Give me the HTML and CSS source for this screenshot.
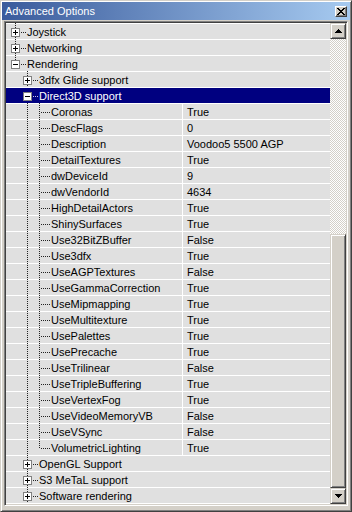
FILE: index.html
```html
<!DOCTYPE html>
<html>
<head>
<meta charset="utf-8">
<title>Advanced Options</title>
<link rel="stylesheet" href="styles.css">
</head>
<body>
<div class="window">
  <div class="titlebar">
    <span class="title">Advanced Options</span>
    <button class="close" type="button" aria-label="Close">
      <svg width="8" height="7" viewBox="0 0 8 7" shape-rendering="crispEdges"><path fill="#000" d="M0 0h2v1h-2zM6 0h2v1h-2zM1 1h2v1h-2zM5 1h2v1h-2zM2 2h4v1h-4zM3 3h2v1h-2zM2 4h4v1h-4zM1 5h2v1h-2zM5 5h2v1h-2zM0 6h2v1h-2zM6 6h2v1h-2z"/></svg>
    </button>
  </div>
  <div class="body">
    <div class="list">
      <div class="rows">
        <div class="row"><span class="c tee"><svg class="box" width="9" height="9" viewBox="0 0 9 9" shape-rendering="crispEdges"><rect x="0.5" y="0.5" width="8" height="8" fill="#fff" stroke="#808080"/><rect x="2" y="4" width="5" height="1"/><rect x="4" y="2" width="1" height="5"/></svg></span><span class="tail"></span><span class="label">Joystick</span></div>
        <div class="row"><span class="c tee"><svg class="box" width="9" height="9" viewBox="0 0 9 9" shape-rendering="crispEdges"><rect x="0.5" y="0.5" width="8" height="8" fill="#fff" stroke="#808080"/><rect x="2" y="4" width="5" height="1"/><rect x="4" y="2" width="1" height="5"/></svg></span><span class="tail"></span><span class="label">Networking</span></div>
        <div class="row"><span class="c last"><svg class="box" width="9" height="9" viewBox="0 0 9 9" shape-rendering="crispEdges"><rect x="0.5" y="0.5" width="8" height="8" fill="#fff" stroke="#808080"/><rect x="2" y="4" width="5" height="1"/></svg></span><span class="tail"></span><span class="label">Rendering</span></div>
        <div class="row"><span class="c"></span><span class="c tee"><svg class="box" width="9" height="9" viewBox="0 0 9 9" shape-rendering="crispEdges"><rect x="0.5" y="0.5" width="8" height="8" fill="#fff" stroke="#808080"/><rect x="2" y="4" width="5" height="1"/><rect x="4" y="2" width="1" height="5"/></svg></span><span class="tail"></span><span class="label">3dfx Glide support</span></div>
        <div class="row selected"><span class="c"></span><span class="c tee"><svg class="box" width="9" height="9" viewBox="0 0 9 9" shape-rendering="crispEdges"><rect x="0.5" y="0.5" width="8" height="8" fill="#fff" stroke="#808080"/><rect x="2" y="4" width="5" height="1"/></svg></span><span class="tail"></span><span class="label">Direct3D support</span></div>
        <div class="row prop"><span class="name"><span class="c"></span><span class="c v"></span><span class="c tee"></span><span class="tail"></span><span class="label">Coronas</span></span><span class="value">True</span></div>
        <div class="row prop"><span class="name"><span class="c"></span><span class="c v"></span><span class="c tee"></span><span class="tail"></span><span class="label">DescFlags</span></span><span class="value">0</span></div>
        <div class="row prop"><span class="name"><span class="c"></span><span class="c v"></span><span class="c tee"></span><span class="tail"></span><span class="label">Description</span></span><span class="value">Voodoo5 5500 AGP</span></div>
        <div class="row prop"><span class="name"><span class="c"></span><span class="c v"></span><span class="c tee"></span><span class="tail"></span><span class="label">DetailTextures</span></span><span class="value">True</span></div>
        <div class="row prop"><span class="name"><span class="c"></span><span class="c v"></span><span class="c tee"></span><span class="tail"></span><span class="label">dwDeviceId</span></span><span class="value">9</span></div>
        <div class="row prop"><span class="name"><span class="c"></span><span class="c v"></span><span class="c tee"></span><span class="tail"></span><span class="label">dwVendorId</span></span><span class="value">4634</span></div>
        <div class="row prop"><span class="name"><span class="c"></span><span class="c v"></span><span class="c tee"></span><span class="tail"></span><span class="label">HighDetailActors</span></span><span class="value">True</span></div>
        <div class="row prop"><span class="name"><span class="c"></span><span class="c v"></span><span class="c tee"></span><span class="tail"></span><span class="label">ShinySurfaces</span></span><span class="value">True</span></div>
        <div class="row prop"><span class="name"><span class="c"></span><span class="c v"></span><span class="c tee"></span><span class="tail"></span><span class="label">Use32BitZBuffer</span></span><span class="value">False</span></div>
        <div class="row prop"><span class="name"><span class="c"></span><span class="c v"></span><span class="c tee"></span><span class="tail"></span><span class="label">Use3dfx</span></span><span class="value">True</span></div>
        <div class="row prop"><span class="name"><span class="c"></span><span class="c v"></span><span class="c tee"></span><span class="tail"></span><span class="label">UseAGPTextures</span></span><span class="value">False</span></div>
        <div class="row prop"><span class="name"><span class="c"></span><span class="c v"></span><span class="c tee"></span><span class="tail"></span><span class="label">UseGammaCorrection</span></span><span class="value">True</span></div>
        <div class="row prop"><span class="name"><span class="c"></span><span class="c v"></span><span class="c tee"></span><span class="tail"></span><span class="label">UseMipmapping</span></span><span class="value">True</span></div>
        <div class="row prop"><span class="name"><span class="c"></span><span class="c v"></span><span class="c tee"></span><span class="tail"></span><span class="label">UseMultitexture</span></span><span class="value">True</span></div>
        <div class="row prop"><span class="name"><span class="c"></span><span class="c v"></span><span class="c tee"></span><span class="tail"></span><span class="label">UsePalettes</span></span><span class="value">True</span></div>
        <div class="row prop"><span class="name"><span class="c"></span><span class="c v"></span><span class="c tee"></span><span class="tail"></span><span class="label">UsePrecache</span></span><span class="value">True</span></div>
        <div class="row prop"><span class="name"><span class="c"></span><span class="c v"></span><span class="c tee"></span><span class="tail"></span><span class="label">UseTrilinear</span></span><span class="value">False</span></div>
        <div class="row prop"><span class="name"><span class="c"></span><span class="c v"></span><span class="c tee"></span><span class="tail"></span><span class="label">UseTripleBuffering</span></span><span class="value">True</span></div>
        <div class="row prop"><span class="name"><span class="c"></span><span class="c v"></span><span class="c tee"></span><span class="tail"></span><span class="label">UseVertexFog</span></span><span class="value">True</span></div>
        <div class="row prop"><span class="name"><span class="c"></span><span class="c v"></span><span class="c tee"></span><span class="tail"></span><span class="label">UseVideoMemoryVB</span></span><span class="value">False</span></div>
        <div class="row prop"><span class="name"><span class="c"></span><span class="c v"></span><span class="c tee"></span><span class="tail"></span><span class="label">UseVSync</span></span><span class="value">False</span></div>
        <div class="row prop"><span class="name"><span class="c"></span><span class="c v"></span><span class="c last"></span><span class="tail"></span><span class="label">VolumetricLighting</span></span><span class="value">True</span></div>
        <div class="row"><span class="c"></span><span class="c tee"><svg class="box" width="9" height="9" viewBox="0 0 9 9" shape-rendering="crispEdges"><rect x="0.5" y="0.5" width="8" height="8" fill="#fff" stroke="#808080"/><rect x="2" y="4" width="5" height="1"/><rect x="4" y="2" width="1" height="5"/></svg></span><span class="tail"></span><span class="label">OpenGL Support</span></div>
        <div class="row"><span class="c"></span><span class="c tee"><svg class="box" width="9" height="9" viewBox="0 0 9 9" shape-rendering="crispEdges"><rect x="0.5" y="0.5" width="8" height="8" fill="#fff" stroke="#808080"/><rect x="2" y="4" width="5" height="1"/><rect x="4" y="2" width="1" height="5"/></svg></span><span class="tail"></span><span class="label">S3 MeTaL support</span></div>
        <div class="row"><span class="c"></span><span class="c tee"><svg class="box" width="9" height="9" viewBox="0 0 9 9" shape-rendering="crispEdges"><rect x="0.5" y="0.5" width="8" height="8" fill="#fff" stroke="#808080"/><rect x="2" y="4" width="5" height="1"/><rect x="4" y="2" width="1" height="5"/></svg></span><span class="tail"></span><span class="label">Software rendering</span></div>
      </div>
      <div class="scrollbar">
        <div class="sbtn"><svg width="7" height="4" viewBox="0 0 7 4" shape-rendering="crispEdges"><path fill="#000" d="M3 0h1v1h1v1h1v1h1v1H0V3h1V2h1V1h1z"/></svg></div>
        <div class="track"><div class="thumb"></div></div>
        <div class="sbtn"><svg width="7" height="4" viewBox="0 0 7 4" shape-rendering="crispEdges"><path fill="#000" d="M0 0h7v1H6v1H5v1H4v1H3V3H2V2H1V1H0z"/></svg></div>
      </div>
    </div>
  </div>
</div>
</body>
</html>
```
FILE: styles.css
```css
* { box-sizing: border-box; }
html, body { margin: 0; padding: 0; }
body {
  width: 352px;
  height: 512px;
  overflow: hidden;
  background: #d4d0c8;
  font-family: "Liberation Sans", Arial, sans-serif;
  font-size: 11px;
  color: #000;
}
.window {
  width: 352px;
  height: 512px;
  display: flex;
  flex-direction: column;
  background: #d4d0c8;
  border: 1px solid;
  border-color: #d4d0c8 #404040 #404040 #d4d0c8;
  box-shadow: inset 1px 1px #fff, inset -1px -1px #808080;
  padding: 1px;
}
.titlebar {
  flex: none;
  height: 18px;
  display: flex;
  align-items: center;
  padding: 0 3px 0 3px;
  background: linear-gradient(to right, #3a5b9c, #a6caf0);
  color: #fff;
}
.title {
  font-size: 11px;
  line-height: 18px;
  white-space: nowrap;
}
.close {
  margin-left: auto;
  width: 12px;
  height: 11px;
  padding: 0;
  display: flex;
  align-items: center;
  justify-content: center;
  background: #d4d0c8;
  border: 1px solid;
  border-color: #fff #404040 #404040 #fff;
  box-shadow: inset -1px -1px #808080;
}
.close svg { display: block; }
.body {
  flex: 1;
  display: flex;
  padding: 1px 2px 4px 2px;
  min-height: 0;
}
.list {
  flex: 1;
  display: flex;
  border: 1px solid;
  border-color: #808080 #fff #fff #808080;
  box-shadow: inset 1px 1px #404040, inset -1px -1px #d4d0c8;
  padding: 1px;
  min-height: 0;
}
.rows {
  flex: 1;
  min-width: 0;
  overflow: hidden;
  background: #fff;
}
.row {
  height: 16px;
  display: flex;
  align-items: flex-start;
  padding-left: 3px;
  background: linear-gradient(#fff 0 1px, #e0e0e0 1px);
  white-space: nowrap;
  overflow: hidden;
}
.row.selected {
  background: linear-gradient(#fff 0 1px, #000080 1px);
  color: #fff;
}
.c {
  flex: none;
  width: 12px;
  height: 16px;
  position: relative;
}
.c.v::before, .c.tee::before, .c.last::before {
  content: "";
  position: absolute;
  left: 6px;
  top: 0;
  width: 1px;
  height: 16px;
  background-image: linear-gradient(to bottom, #222 50%, transparent 50%);
  background-size: 1px 2px;
}
.c.last::before { height: 9px; }
.c.tee::after, .c.last::after {
  content: "";
  position: absolute;
  left: 7px;
  right: 0;
  top: 9px;
  height: 1px;
  background-image: linear-gradient(to right, transparent 50%, #222 50%);
  background-size: 2px 1px;
}
.tail {
  flex: none;
  width: 5px;
  height: 16px;
  position: relative;
}
.tail::after {
  content: "";
  position: absolute;
  left: 0;
  right: 0;
  top: 9px;
  height: 1px;
  background-image: linear-gradient(to right, #222 50%, transparent 50%);
  background-size: 2px 1px;
}
.selected .c::before, .selected .c::after, .selected .tail::after {
  background-image: none;
}
.selected .tail::after {
  background-image: linear-gradient(to right, #c8c8e8 50%, transparent 50%);
}
.box {
  position: absolute;
  left: 2px;
  top: 5px;
  display: block;
  z-index: 1;
}
.label {
  margin-left: 1px;
  margin-top: 1px;
  line-height: 16px;
}
.name {
  flex: none;
  width: 173px;
  display: flex;
  align-items: flex-start;
}
.value {
  flex: 1;
  height: 16px;
  margin-top: 1px;
  border-left: 1px solid #fff;
  padding-left: 4px;
  line-height: 16px;
}
.scrollbar {
  flex: none;
  width: 16px;
  display: flex;
  flex-direction: column;
}
.sbtn {
  flex: none;
  width: 16px;
  height: 16px;
  display: flex;
  align-items: center;
  justify-content: center;
  background: #d4d0c8;
  border: 1px solid;
  border-color: #d4d0c8 #404040 #404040 #d4d0c8;
  box-shadow: inset 1px 1px #fff, inset -1px -1px #808080;
}
.sbtn svg { display: block; }
.track {
  flex: 1;
  display: flex;
  flex-direction: column;
  justify-content: flex-end;
  background-color: #fff;
  background-image: conic-gradient(#d4d0c8 25%, #fff 0 50%, #d4d0c8 0 75%, #fff 0);
  background-size: 2px 2px;
}
.thumb {
  height: 254px;
  background: #d4d0c8;
  border: 1px solid;
  border-color: #d4d0c8 #404040 #404040 #d4d0c8;
  box-shadow: inset 1px 1px #fff, inset -1px -1px #808080;
}
```
